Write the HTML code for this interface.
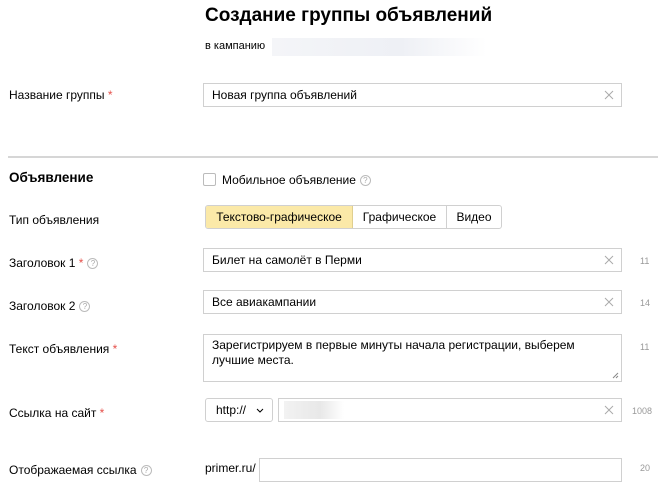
<!DOCTYPE html>
<html><head><meta charset="utf-8"><style>
*{box-sizing:border-box;margin:0;padding:0}
body{width:658px;height:490px;background:#fff;font-family:"Liberation Sans",sans-serif;color:#000;position:relative;overflow:hidden;font-size:12px}
.a{position:absolute;white-space:nowrap}
.lbl{position:absolute;left:9px;font-size:12px;color:#000}
.req{color:#e5504a}
.inp{position:absolute;border:1px solid #d0d0d0;background:#fff;height:24px;font-size:12px;padding:0 8px;line-height:22px}
.x{position:absolute;right:7px;top:6px;width:10px;height:10px}
.q{display:inline-block;width:11px;height:11px;border:1px solid #bbb;border-radius:50%;font-size:8px;line-height:9px;text-align:center;color:#aaa;vertical-align:middle;margin-left:4px}
.cnt{position:absolute;left:640px;font-size:9px;color:#999}
</style></head><body>
<div class="a" style="left:205px;top:5px;font-size:19px;font-weight:bold">Создание группы объявлений</div>
<div class="a" style="left:205px;top:40px;font-size:11px">в кампанию</div>
<div class="a" style="left:272px;top:38px;width:215px;height:18px;background:linear-gradient(90deg,#f4f5f8,#eef0f5 60%,#fff)"></div>

<div class="lbl" style="top:88px">Название группы <span class="req">*</span></div>
<div class="inp" style="left:203px;top:83px;width:419px">Новая группа объявлений<svg class="x" viewBox="0 0 10 10"><path d="M1 1L9 9M9 1L1 9" stroke="#aaa" stroke-width="1"/></svg></div>

<div class="a" style="left:8px;top:156px;width:650px;height:2px;background:#d6d6d6"></div>

<div class="lbl" style="top:170px;font-weight:bold;font-size:13.5px">Объявление</div>
<div class="a" style="left:203px;top:173px;width:13px;height:13px;border:1px solid #bbb;border-radius:2px"></div>
<div class="a" style="left:222px;top:173px;font-size:12px">Мобильное объявление<span class="q">?</span></div>

<div class="lbl" style="top:213px">Тип объявления</div>
<div class="a" style="left:205px;top:205px;width:297px;height:24px;border:1px solid #d0d0d0;border-radius:3px;overflow:hidden;display:flex;font-size:12px;line-height:22px">
<div style="width:147px;background:#fbe9a8;border-right:1px solid #e0cf8f;text-align:center">Текстово-графическое</div>
<div style="width:94px;border-right:1px solid #d0d0d0;text-align:center">Графическое</div>
<div style="flex:1;text-align:center">Видео</div>
</div>

<div class="lbl" style="top:256px">Заголовок 1 <span class="req">*</span><span class="q">?</span></div>
<div class="inp" style="left:203px;top:248px;width:419px">Билет на самолёт в Перми<svg class="x" viewBox="0 0 10 10"><path d="M1 1L9 9M9 1L1 9" stroke="#aaa" stroke-width="1"/></svg></div>
<div class="cnt" style="top:256px">11</div>

<div class="lbl" style="top:299px">Заголовок 2<span class="q">?</span></div>
<div class="inp" style="left:203px;top:290px;width:419px">Все авиакампании<svg class="x" viewBox="0 0 10 10"><path d="M1 1L9 9M9 1L1 9" stroke="#aaa" stroke-width="1"/></svg></div>
<div class="cnt" style="top:298px">14</div>

<div class="lbl" style="top:342px">Текст объявления <span class="req">*</span></div>
<div class="inp" style="left:203px;top:334px;width:419px;height:48px;line-height:15px;padding-top:3px;white-space:normal">Зарегистрируем в первые минуты начала регистрации, выберем<br>лучшие места.<svg style="position:absolute;right:2px;bottom:2px;width:7px;height:7px" viewBox="0 0 7 7"><path d="M6 1L1 6M6 4L4 6" stroke="#888"/></svg></div>
<div class="cnt" style="top:342px">11</div>

<div class="lbl" style="top:406px">Ссылка на сайт <span class="req">*</span></div>
<div class="inp" style="left:205px;top:398px;width:68px;border-radius:3px;padding:0 0 0 10px">http://<svg style="position:absolute;left:50px;top:9px;width:8px;height:5px" viewBox="0 0 8 5"><path d="M1 1L4 4L7 1" stroke="#000" fill="none"/></svg></div>
<div class="inp" style="left:278px;top:398px;width:344px"><span class="a" style="left:5px;top:2px;width:60px;height:18px;background:linear-gradient(90deg,#f2f2f2,#e8e8e8 60%,#fff)"></span><svg class="x" viewBox="0 0 10 10"><path d="M1 1L9 9M9 1L1 9" stroke="#aaa" stroke-width="1"/></svg></div>
<div class="cnt" style="left:632px;top:406px">1008</div>

<div class="lbl" style="top:463px">Отображаемая ссылка<span class="q">?</span></div>
<div class="a" style="left:205px;top:461px;font-size:12px">primer.ru/</div>
<div class="inp" style="left:259px;top:458px;width:363px"></div>
<div class="cnt" style="top:463px">20</div>
</body></html>
